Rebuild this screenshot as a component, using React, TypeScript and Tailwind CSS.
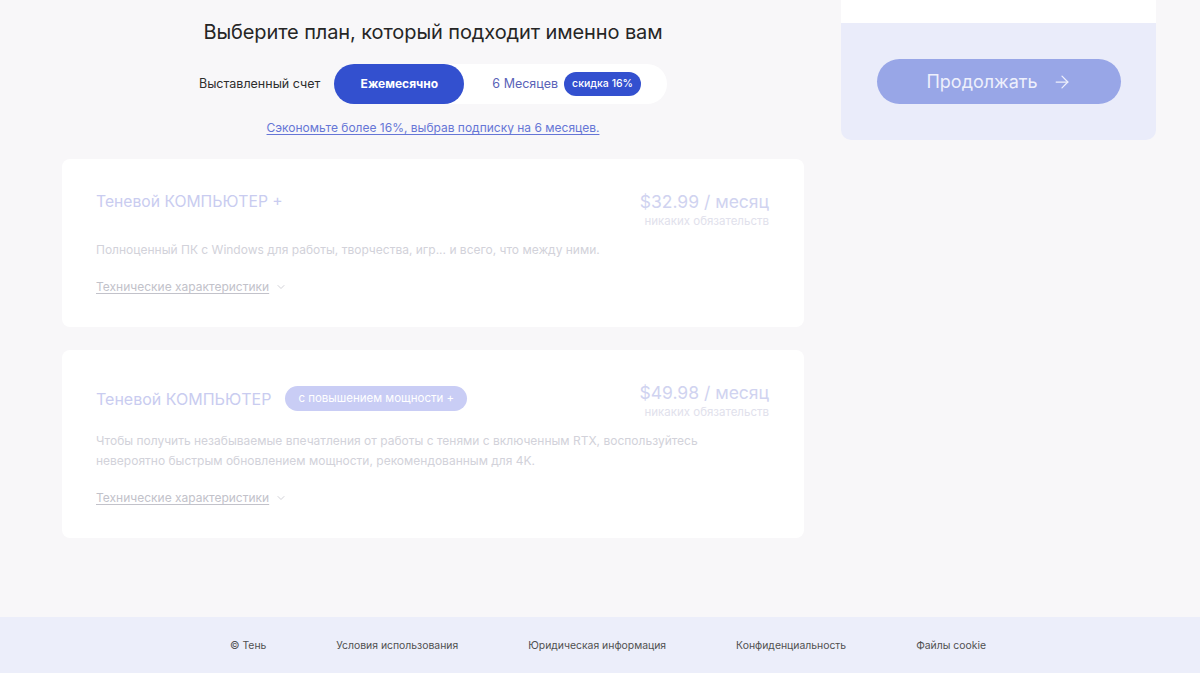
import { ChevronDown, ArrowRight } from 'lucide-react'

interface Plan {
  id: string
  name: string
  badge?: string
  price: string
  note: string
  description: string[]
}

const PLANS: Plan[] = [
  {
    id: 'plus',
    name: 'Теневой КОМПЬЮТЕР +',
    price: '$32.99 / месяц',
    note: 'никаких обязательств',
    description: ['Полноценный ПК с Windows для работы, творчества, игр... и всего, что между ними.']
  },
  {
    id: 'boost',
    name: 'Теневой КОМПЬЮТЕР',
    badge: 'с повышением мощности +',
    price: '$49.98 / месяц',
    note: 'никаких обязательств',
    description: [
      'Чтобы получить незабываемые впечатления от работы с тенями с включенным RTX, воспользуйтесь',
      'невероятно быстрым обновлением мощности, рекомендованным для 4K.'
    ]
  }
]

const FOOTER_LINKS = ['© Тень', 'Условия использования', 'Юридическая информация', 'Конфиденциальность', 'Файлы cookie']

function PlanCard({ plan }: { plan: Plan }) {
  return (
    <div className="bg-white rounded-[8px] pt-[32px] pb-[30px] pl-[34px] pr-[35px]">
      {/* Header: name + price */}
      <div className="flex justify-between items-start">
        {plan.badge ? (
          <div className="flex items-center h-[25px] mt-[4px] gap-[14px]">
            <span className="text-[16px] leading-[20px] text-[#c9ccf0]">{plan.name}</span>
            <span className="h-[25px] px-[13px] rounded-full bg-[#c9cdf5] text-white text-[11.5px] flex items-center">
              {plan.badge}
            </span>
          </div>
        ) : (
          <span className="mt-[1px] text-[15.7px] leading-[20px] text-[#c9ccf0]">{plan.name}</span>
        )}
        <div className="text-right">
          <div className="text-[17.5px] leading-[22px] text-[#d0d3f0]">{plan.price}</div>
          <div className="text-[11.5px] leading-[16px] text-[#e1e1ec]">{plan.note}</div>
        </div>
      </div>

      <div className="mt-[11px] text-[12px] leading-[20px] text-[#d2d2da]">
        {plan.description.map((line, i) => (
          <div key={i}>{line}</div>
        ))}
      </div>

      <div className="mt-[17px] flex items-center gap-[6px] h-[20px]">
        <span className="text-[12px] leading-[20px] text-[#c2c2ca] underline underline-offset-2">
          Технические характеристики
        </span>
        <ChevronDown size={12} strokeWidth={1.5} className="text-[#c2c2ca]" />
      </div>
    </div>
  )
}

export default function App() {
  return (
    <div
      className="min-h-screen flex flex-col bg-[#f8f7f9]"
      style={{ fontFamily: 'Inter, "Noto Sans", sans-serif' }}
    >
      <main className="flex-1 flex pl-[62px] gap-[37px]">
        {/* Plans column */}
        <section className="w-[742px] pt-[18px]">
          <h1 className="text-center text-[20px] leading-[28px] text-[#262626] tracking-[-0.1px]">
            Выберите план, который подходит именно вам
          </h1>

          {/* Billing period toggle */}
          <div className="mt-[18px] flex justify-center items-center gap-[14px]">
            <span className="text-[12.5px] text-[#2e2e2e]">Выставленный счет</span>
            <div className="flex items-center h-[40px] bg-white rounded-full pr-[26px]">
              <button className="h-[40px] w-[130px] rounded-full bg-[#3350cf] text-white text-[12px] font-bold">
                Ежемесячно
              </button>
              <span className="ml-[28px] text-[12.5px] text-[#5a63b8]">6 Месяцев</span>
              <span className="ml-[6px] h-[24px] px-[8px] rounded-full bg-[#3350cf] text-white text-[10.5px] font-medium flex items-center">
                скидка 16%
              </span>
            </div>
          </div>

          <p className="mt-[16px] text-center text-[12px] leading-[16px] text-[#6676d6] underline underline-offset-2">
            Сэкономьте более 16%, выбрав подписку на 6 месяцев.
          </p>

          <div className="mt-[23px] flex flex-col gap-[23px]">
            {PLANS.map(plan => (
              <PlanCard key={plan.id} plan={plan} />
            ))}
          </div>
        </section>

        {/* Summary column */}
        <aside className="w-[315px]">
          <div className="h-[23px] bg-white" />
          <div className="bg-[#eaecfa] rounded-b-[10px] pt-[36px] pb-[36px] pl-[36px] pr-[35px]">
            <button className="w-[244px] h-[45px] rounded-full bg-[#98a6e7] text-[#eef0fc] text-[18px] flex items-center justify-center gap-[14px]">
              Продолжать
              <ArrowRight size={20} strokeWidth={1.5} />
            </button>
          </div>
        </aside>
      </main>

      <footer className="h-[56px] bg-[#eceefa] flex items-center justify-center gap-[70px] pl-[16px] pt-[2px]">
        {FOOTER_LINKS.map(link => (
          <span key={link} className="text-[10.4px] text-[#505050]">
            {link}
          </span>
        ))}
      </footer>
    </div>
  )
}
